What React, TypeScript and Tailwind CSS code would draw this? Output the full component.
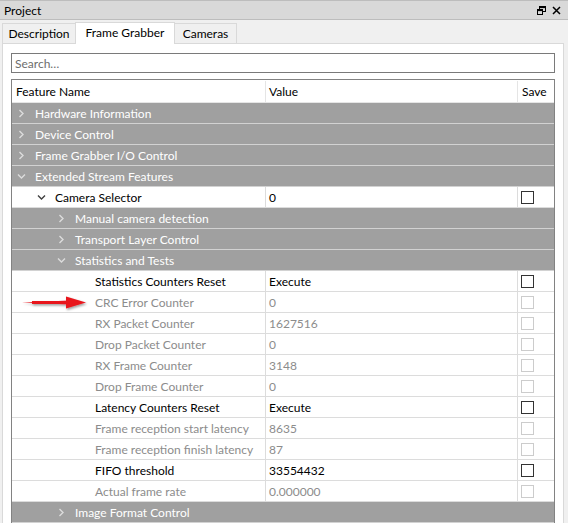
import React from "react";

type Row =
  | { kind: "group"; level: number; label: string; open: boolean }
  | { kind: "item"; level: number; label: string; value: string; enabled: boolean; chevron?: "open" | "closed" };

const rows: Row[] = [
  { kind: "group", level: 0, label: "Hardware Information", open: false },
  { kind: "group", level: 0, label: "Device Control", open: false },
  { kind: "group", level: 0, label: "Frame Grabber I/O Control", open: false },
  { kind: "group", level: 0, label: "Extended Stream Features", open: true },
  { kind: "item", level: 1, label: "Camera Selector", value: "0", enabled: true, chevron: "open" },
  { kind: "group", level: 2, label: "Manual camera detection", open: false },
  { kind: "group", level: 2, label: "Transport Layer Control", open: false },
  { kind: "group", level: 2, label: "Statistics and Tests", open: true },
  { kind: "item", level: 3, label: "Statistics Counters Reset", value: "Execute", enabled: true },
  { kind: "item", level: 3, label: "CRC Error Counter", value: "0", enabled: false },
  { kind: "item", level: 3, label: "RX Packet Counter", value: "1627516", enabled: false },
  { kind: "item", level: 3, label: "Drop Packet Counter", value: "0", enabled: false },
  { kind: "item", level: 3, label: "RX Frame Counter", value: "3148", enabled: false },
  { kind: "item", level: 3, label: "Drop Frame Counter", value: "0", enabled: false },
  { kind: "item", level: 3, label: "Latency Counters Reset", value: "Execute", enabled: true },
  { kind: "item", level: 3, label: "Frame reception start latency", value: "8635", enabled: false },
  { kind: "item", level: 3, label: "Frame reception finish latency", value: "87", enabled: false },
  { kind: "item", level: 3, label: "FIFO threshold", value: "33554432", enabled: true },
  { kind: "item", level: 3, label: "Actual frame rate", value: "0.000000", enabled: false },
  { kind: "group", level: 2, label: "Image Format Control", open: false },
];

function Chevron({ open, color }: { open: boolean; color: string }) {
  return open ? (
    <svg width="9" height="9" viewBox="0 0 9 9" className="shrink-0">
      <polyline points="1,2.5 4.5,6 8,2.5" fill="none" stroke={color} strokeWidth="1.4" />
    </svg>
  ) : (
    <svg width="9" height="9" viewBox="0 0 9 9" className="shrink-0">
      <polyline points="2.5,1 6,4.5 2.5,8" fill="none" stroke={color} strokeWidth="1.4" />
    </svg>
  );
}

// chevron box starts at 5 + 20*level, text at 23 + 20*level (relative to table inner left)
const indentClass = ["pl-[5px]", "pl-[25px]", "pl-[45px]", "pl-[65px]"];

export default function App() {
  return (
    <div
      className="relative w-[568px] h-[523px] overflow-hidden bg-[#f0f0f0] text-[12px] text-black whitespace-nowrap"
      style={{ fontFamily: 'Lato, "Noto Sans", sans-serif' }}
    >
      {/* title bar */}
      <div className="h-[20px] bg-[#d9d9d9] border-t border-b border-[#bdbdbd] flex items-center justify-between pl-[4px] pr-[7px]">
        <span className="leading-none pt-px">Project</span>
        <div className="flex items-center gap-[6px]">
          <svg width="9" height="9" viewBox="0 0 9 9">
            <rect x="2.5" y="0.5" width="6" height="5" fill="none" stroke="#000" strokeWidth="1" />
            <rect x="2.5" y="0.5" width="6" height="1.6" fill="#000" />
            <rect x="0.5" y="3.5" width="5" height="5" fill="#d9d9d9" stroke="#000" strokeWidth="1" />
            <rect x="0.5" y="3.5" width="5" height="1.6" fill="#000" />
          </svg>
          <svg width="9" height="9" viewBox="0 0 9 9">
            <path d="M1 1 L8 8 M8 1 L1 8" stroke="#000" strokeWidth="1.5" />
          </svg>
        </div>
      </div>

      {/* tabs */}
      <div className="h-[23px] flex items-end pl-[2px]">
        <div className="h-[20px] w-[73px] border-t border-l border-[#d9d9d9] bg-[#f0f0f0] flex items-center justify-center pt-px">
          Description
        </div>
        <div className="h-[22px] w-[100px] border-t border-l border-r border-[#d9d9d9] bg-white flex items-center justify-center pb-[2px] relative z-10 -mb-px">
          Frame Grabber
        </div>
        <div className="h-[20px] w-[62px] border-t border-r border-[#d9d9d9] bg-[#f0f0f0] flex items-center justify-center pt-px">
          Cameras
        </div>
      </div>

      {/* panel */}
      <div className="ml-[2px] w-[562px] h-[480px] bg-white border-t border-l border-r border-[#d9d9d9] pl-[8px] pt-[9px]">
        <div className="w-[544px] h-[20px] border border-[#7a7a7a] flex items-center pl-[3px] pt-px text-[#6d6d6d]">
          Search…
        </div>
        <div className="mt-[6px] w-[544px] border-t border-l border-r border-[#828282]">
          {/* header */}
          <div className="h-[23px] flex bg-white border-b border-[#e5e5e5] pt-px">
            <div className="w-[254px] border-r border-[#e5e5e5] flex items-center pl-[4px]">Feature Name</div>
            <div className="w-[252px] border-r border-[#e5e5e5] flex items-center pl-[3px]">Value</div>
            <div className="flex-1 flex items-center pl-[4px]">Save</div>
          </div>
          {rows.map((r, i) =>
            r.kind === "group" ? (
              <div
                key={i}
                className={`h-[21px] bg-[#a0a0a0] border-b border-[#d2d2d2] flex items-center text-white ${indentClass[r.level]}`}
              >
                <div className="w-[18px] shrink-0 flex items-center">
                  <Chevron open={r.open} color="#dcdcdc" />
                </div>
                <span className="pt-px">{r.label}</span>
              </div>
            ) : (
              <div key={i} className="h-[21px] flex bg-white border-b border-[#dcdcdc]">
                <div
                  className={`w-[254px] border-r border-[#dcdcdc] flex items-center ${
                    r.enabled ? "text-black" : "text-[#8c8c8c]"
                  } ${indentClass[r.level]}`}
                >
                  <div className="w-[18px] shrink-0 flex items-center">
                    {r.chevron && <Chevron open={r.chevron === "open"} color="#404040" />}
                  </div>
                  <span className="pt-px">{r.label}</span>
                </div>
                <div
                  className={`w-[252px] border-r border-[#dcdcdc] flex items-center pl-[3px] pt-px ${
                    r.enabled ? "text-black" : "text-[#8c8c8c]"
                  }`}
                >
                  {r.value}
                </div>
                <div className="flex-1 flex items-center pl-[3px]">
                  <div
                    className={`w-[13px] h-[13px] border ${
                      r.enabled ? "border-[#333333]" : "border-[#cccccc]"
                    } bg-white`}
                  />
                </div>
              </div>
            )
          )}
        </div>
      </div>

      {/* red arrow annotation */}
      <svg
        className="absolute left-[18px] top-[293px]"
        width="74"
        height="20"
        viewBox="0 0 74 20"
      >
        <defs>
          <filter id="sh" x="-20%" y="-50%" width="140%" height="200%">
            <feDropShadow dx="1" dy="1.5" stdDeviation="1.3" floodColor="#000" floodOpacity="0.4" />
          </filter>
        </defs>
        <g filter="url(#sh)">
          <path d="M4 9.5 L52 7.6 L52 11.4 Z" fill="#e8141c" />
          <rect x="14" y="8" width="38" height="3" fill="#e8141c" />
          <path d="M48 3.5 L68 9.5 L48 15.5 Z" fill="#e8141c" />
        </g>
      </svg>
    </div>
  );
}
